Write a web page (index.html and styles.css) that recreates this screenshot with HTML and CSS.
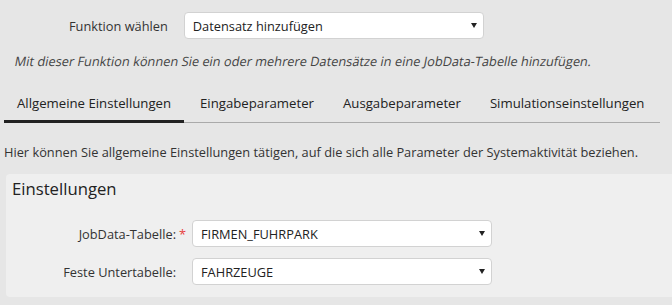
FILE: index.html
```html
<!DOCTYPE html>
<html lang="de">
<head>
    <meta charset="UTF-8">
    <title>Systemaktivität - Datensatz hinzufügen</title>
    <link rel="stylesheet" href="styles.css">
</head>
<body>
    <div class="func-row">
        <label class="func-label">Funktion wählen</label>
        <div class="select">
            <span>Datensatz hinzufügen</span>
            <svg class="arrow" width="6" height="5" viewBox="0 0 6 5"><path d="M0 0H6L3 5Z" fill="#222"/></svg>
        </div>
    </div>
    <p class="func-desc"><span>Mit dieser Funktion können Sie ein oder mehrere Datensätze in eine JobData-Tabelle hinzufügen.</span></p>

    <div class="tabs">
        <div class="tab active">Allgemeine Einstellungen</div>
        <div class="tab">Eingabeparameter</div>
        <div class="tab">Ausgabeparameter</div>
        <div class="tab">Simulationseinstellungen</div>
    </div>

    <p class="tab-desc">Hier können Sie allgemeine Einstellungen tätigen, auf die sich alle Parameter der Systemaktivität beziehen.</p>

    <div class="panel">
        <h2>Einstellungen</h2>
        <div class="form-row">
            <label class="form-label">JobData-Tabelle:</label>
            <span class="req">*</span>
            <div class="select">
                <span>FIRMEN_FUHRPARK</span>
                <svg class="arrow" width="6" height="5" viewBox="0 0 6 5"><path d="M0 0H6L3 5Z" fill="#222"/></svg>
            </div>
        </div>
        <div class="form-row">
            <label class="form-label">Feste Untertabelle:</label>
            <span class="req"></span>
            <div class="select">
                <span>FAHRZEUGE</span>
                <svg class="arrow" width="6" height="5" viewBox="0 0 6 5"><path d="M0 0H6L3 5Z" fill="#222"/></svg>
            </div>
        </div>
    </div>
</body>
</html>
```

FILE: styles.css
```css
body {
    margin: 0;
    background-color: #e6e6e6;
    font-family: "Open Sans", Arial, sans-serif;
    font-size: 12.8px;
    line-height: 18px;
    color: #333;
}
.func-row {
    display: flex;
    align-items: center;
    padding: 12px 0 0 69px;
    gap: 16px;
}
.select {
    display: flex;
    align-items: center;
    justify-content: space-between;
    box-sizing: border-box;
    width: 300px;
    height: 27px;
    padding: 0 6px 0 8px;
    background-color: white;
    border: 1px solid #d2d2d2;
    border-radius: 4px;
    color: #222;
}
.arrow {
    display: block;
}
.func-desc {
    margin: 13px 0 0 15px;
    color: #444;
}
/* schräg gestellte Normalschrift statt echter Kursive */
.func-desc span {
    display: inline-block;
    transform: skewX(-11deg);
}
.tabs {
    display: flex;
    margin: 18px 12px 0 4px;
    border-bottom: 1px solid #aaa;
}
.tab {
    flex-shrink: 0;
    white-space: nowrap;
    padding: 6px 13px 8px;
    margin: 0 3px -1px 0;
    font-size: 13.2px;
    color: #222;
    border-bottom: 3px solid transparent;
}
.tab:last-child {
    margin-right: 0;
}
.tab.active {
    border-bottom-color: #222;
}
.tab-desc {
    margin: 20px 0 0 4px;
}
.panel {
    margin: 13px 0 0 6px;
    padding: 4px 0 12px 6px;
    background-color: #efefef;
    border-radius: 4px 0 0 4px;
}
h2 {
    margin: 0 0 20px;
    font-size: 16.7px;
    line-height: 22px;
    font-weight: normal;
    color: #222;
}
.form-row {
    display: flex;
    align-items: center;
    margin-bottom: 11px;
}
.form-row:last-child {
    margin-bottom: 0;
}
.form-label {
    width: 164px;
    text-align: right;
}
.req {
    width: 16px;
    padding-left: 3px;
    box-sizing: border-box;
    color: #e84040;
}
```
